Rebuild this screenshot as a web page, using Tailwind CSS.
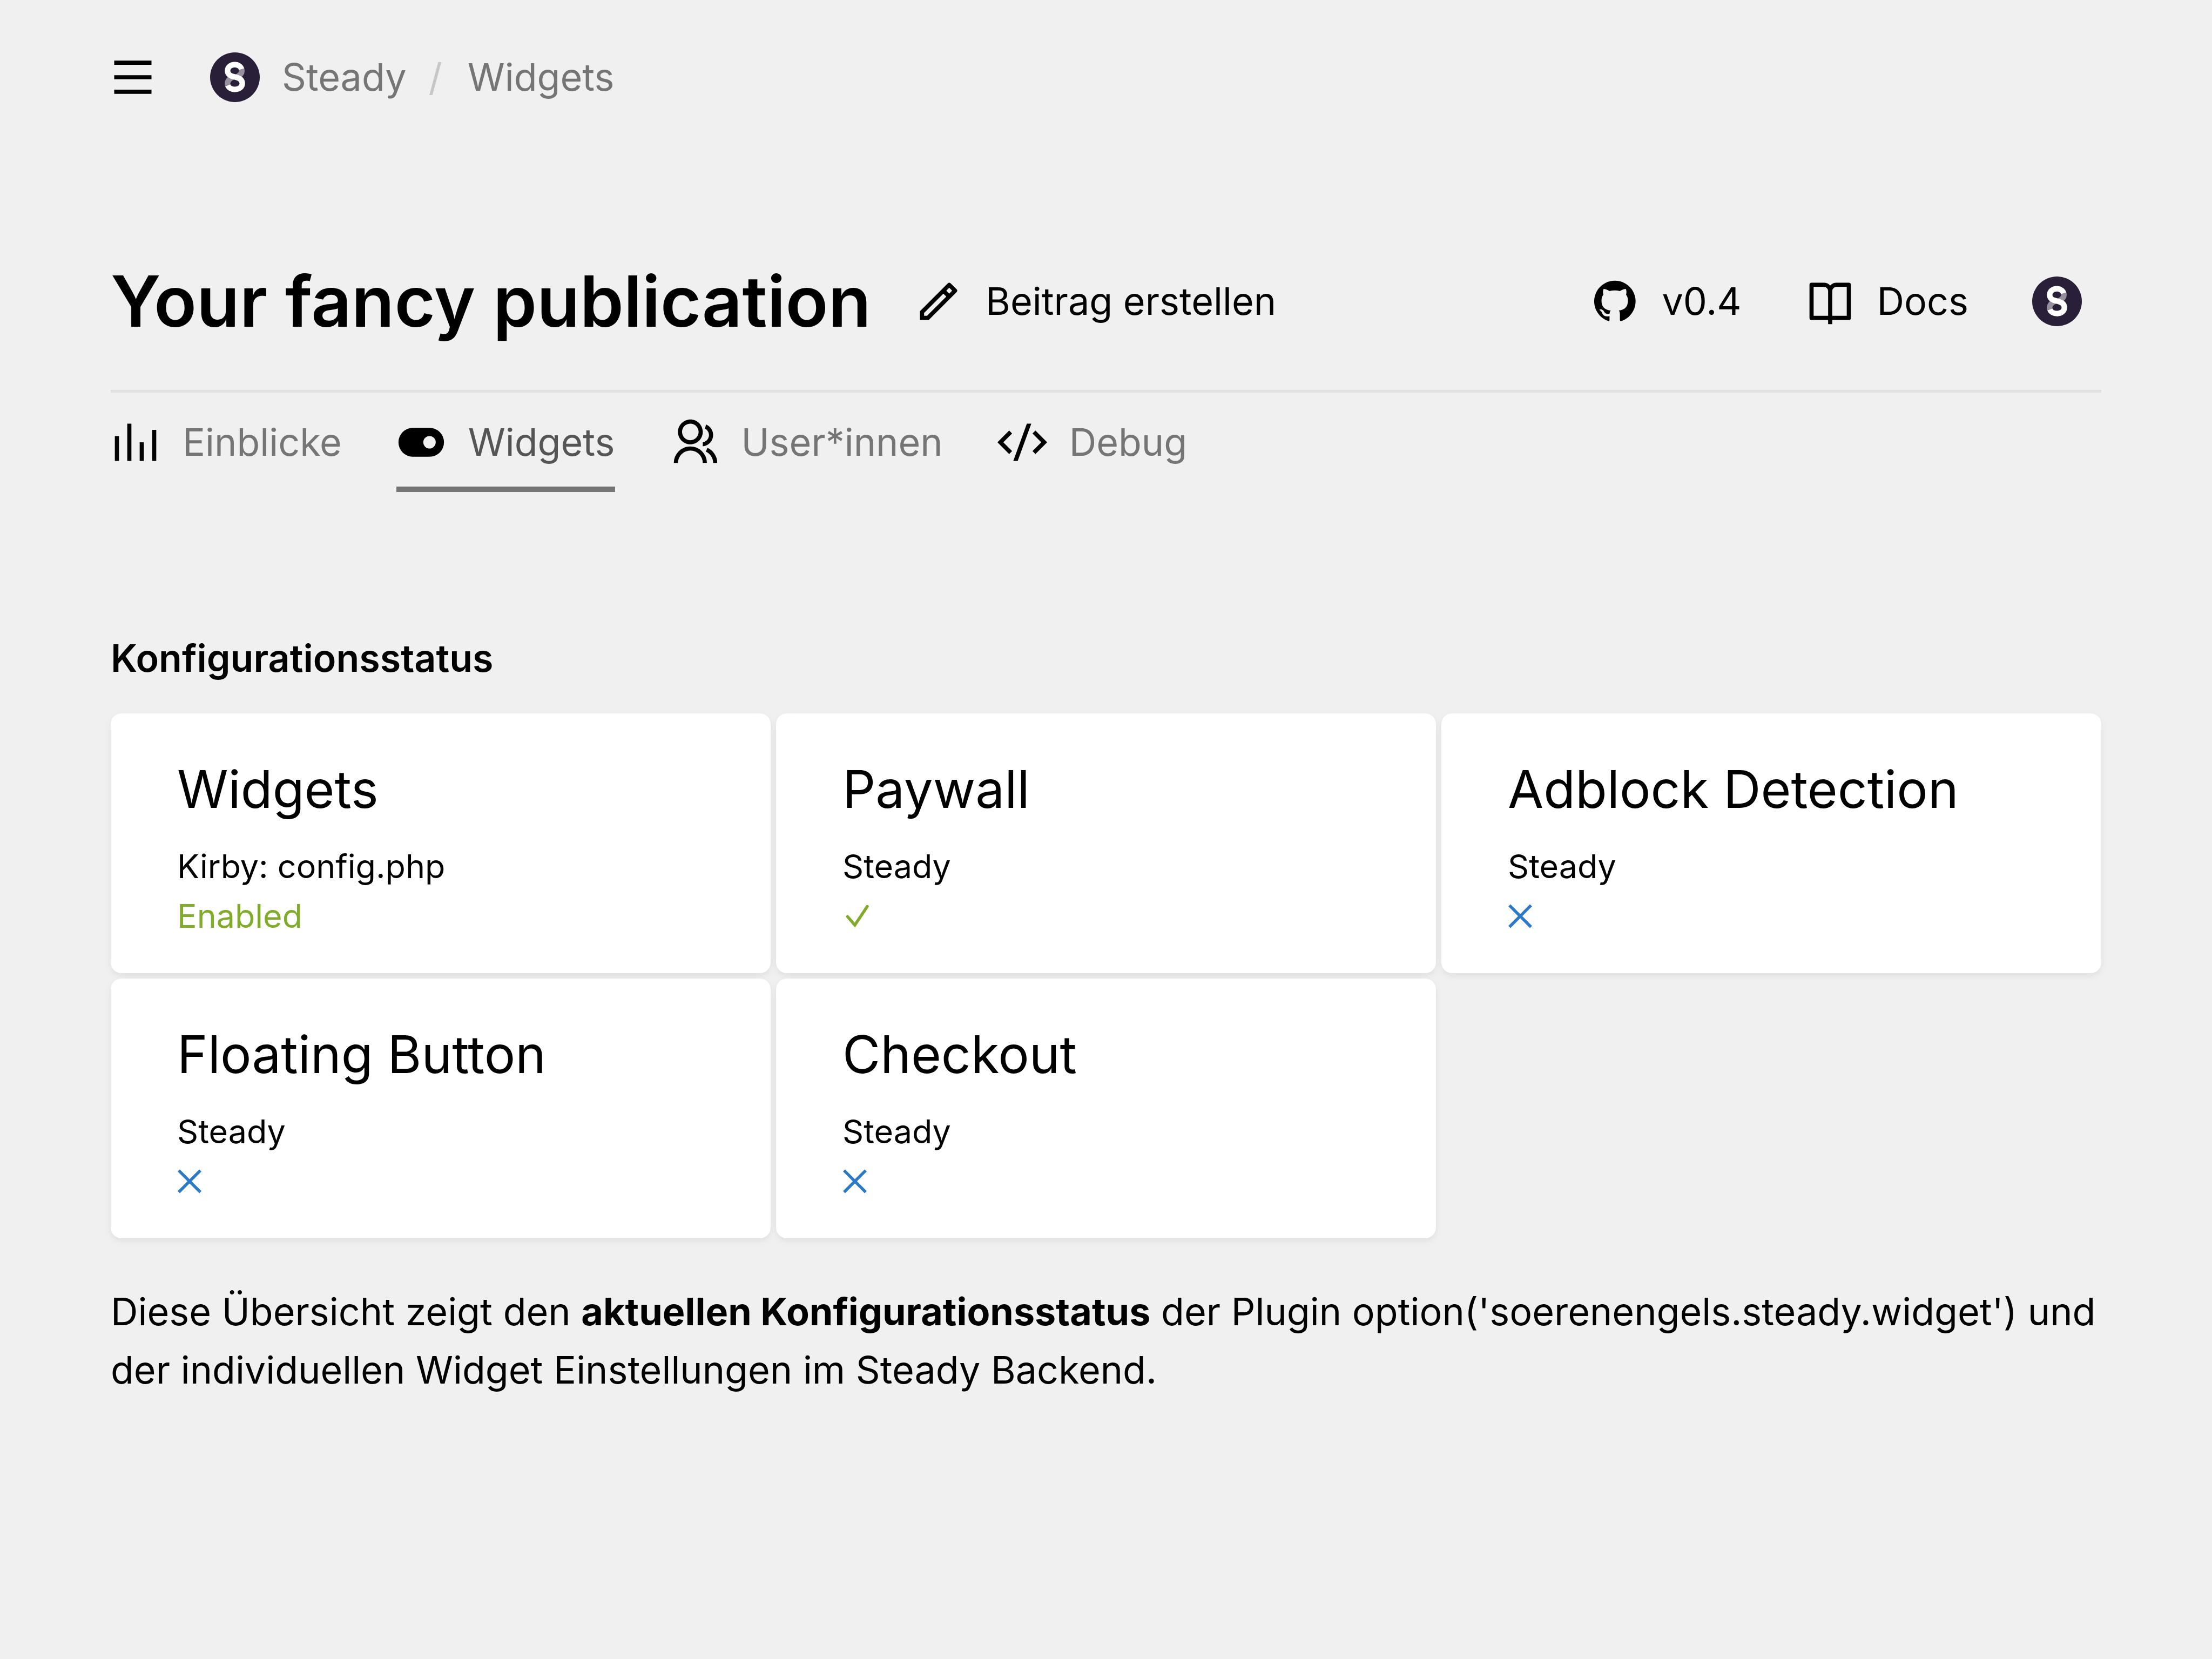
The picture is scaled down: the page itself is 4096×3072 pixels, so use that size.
<!DOCTYPE html>
<html lang="de">
<head>
<meta charset="utf-8">
<title>Widgets | Steady</title>
<script src="https://cdn.jsdelivr.net/npm/@tailwindcss/browser@4"></script>
</head>
<body class="min-h-screen bg-[#f0f0f0] font-[Inter,sans-serif] text-[70px] leading-[108px] text-black">
<svg class="hidden" aria-hidden="true">
  <symbol id="steady" viewBox="0 0 108 108">
    <circle cx="54" cy="54" r="54" fill="#2a1f38"/>
    <g fill="none" stroke-width="12">
      <path d="M68.500 36.500C71 45 65 50 57 54M38.500 71.500C36 62 42 57 51 53" stroke="#958f9e"/>
      <path d="M68.500 36.500C67 31 61 26.500 54 26.500C45 26.500 38 32 38 40C38 48 44 51.500 54 53.500C64 55.500 70 60 70 67.500C70 75.500 63 80.500 54 80.500C47 80.500 40.500 77 38.500 71.500" stroke="#fff"/>
    </g>
  </symbol>
  <symbol id="cross" viewBox="0 0 54 54"><path d="M3.500 4l47 47M50.500 4l-47 47" fill="none" stroke="currentColor" stroke-width="6.500"/></symbol>
</svg>
<div class="px-[205px]">
  <nav class="-ml-[5px] flex h-[286px] items-center" aria-label="Breadcrumb">
    <button type="button" aria-label="Menu" class="mr-[97px]"><svg class="size-[92px]" viewBox="0 0 24 24"><path d="M3 4h18v2H3V4zm0 7h18v2H3v-2zm0 7h18v2H3v-2z"/></svg></button>
    <a href="#" class="flex items-center gap-[41px] text-[#757575]"><svg class="size-[92px]"><use href="#steady"/></svg>Steady</a>
    <span class="ml-[41px] mr-[47px] text-[#c6c6c6]">/</span>
    <a href="#" class="text-[#757575]">Widgets</a>
  </nav>
  <header class="mt-[108px] flex h-[333px] items-center border-b-[5px] border-[#e0e0e0]">
    <h1 class="mr-[79px] text-[130px] font-semibold leading-[180px]">Your fancy publication</h1>
    <a href="#" class="flex items-center gap-[41px]"><svg class="size-[92px]" viewBox="0 0 24 24"><path d="M15.728 9.686l-1.414-1.414L5 17.586V19h1.414l9.314-9.314zm1.414-1.414l1.414-1.414-1.414-1.414-1.414 1.414 1.414 1.414zM7.242 21H3v-4.243L16.435 3.322a1 1 0 0 1 1.414 0l2.829 2.829a1 1 0 0 1 0 1.414L7.243 21z"/></svg>Beitrag erstellen</a>
    <div class="ml-auto flex items-center gap-[118px] pr-[36px]">
      <a href="#" class="flex items-center gap-[41px]"><svg class="size-[92px]" viewBox="0 0 108 108"><path d="M41 97A45 45 0 1 1 67.700 97Q65.300 97.300 65.300 94.500V83Q65.300 76 62.700 74C74 72.500 82.700 68 82.700 52C82.700 47 81.500 43 78.700 39.700Q80.500 33 78.300 27Q73 27 65.300 31.700Q54 29 42.700 31.700Q35 27 29.700 27Q27.500 33 29.300 39.700C26.500 43 25.300 47 25.300 52C25.300 68 34 72.500 45.300 74Q43.200 76 42.800 80.700C38 82 34 81.500 31.500 77.500C29.500 73.500 26.500 71 23.500 71.300C20 71.700 20.500 73 22 73.700C25 75.300 26 78 27 80.500C29 86 34.500 87.800 42.700 86.300V94.500Q42.700 97.300 41 97Z"/></svg>v0.4</a>
      <a href="#" class="flex items-center gap-[41px]"><svg class="size-[92px]" viewBox="0 0 24 24"><path d="M13 21v2h-2v-2H3a1 1 0 0 1-1-1V4a1 1 0 0 1 1-1h6a3.99 3.99 0 0 1 3 1.354A3.99 3.99 0 0 1 15 3h6a1 1 0 0 1 1 1v16a1 1 0 0 1-1 1h-8zm7-2V5h-5a2 2 0 0 0-2 2v12h7zm-9 0V7a2 2 0 0 0-2-2H4v14h7z"/></svg>Docs</a>
      <a href="#" aria-label="Steady"><svg class="size-[92px]"><use href="#steady"/></svg></a>
    </div>
  </header>
  <nav class="flex gap-[101px] text-[#757575]" aria-label="Tabs">
    <a href="#" class="flex h-[184px] items-center gap-[41px]"><svg class="size-[92px] text-black" viewBox="0 0 24 24" fill="currentColor"><path d="M2 9h2v12H2zM8 3h2v18H8zM14 12h2v9h-2zM20 6h2v15h-2z"/></svg>Einblicke</a>
    <a href="#" aria-current="page" class="flex h-[184px] items-center gap-[41px] border-b-[10px] border-[#757575] pt-[10px] text-[#555]"><svg class="size-[92px] text-black" viewBox="0 0 24 24" fill="currentColor"><path d="M8 5h8a7 7 0 0 1 0 14H8A7 7 0 0 1 8 5zm8 10a3 3 0 1 0 0-6 3 3 0 0 0 0 6z"/></svg>Widgets</a>
    <a href="#" class="flex h-[184px] items-center gap-[41px]"><svg class="size-[92px] text-black" viewBox="0 0 24 24" fill="currentColor"><path d="M2 22a8 8 0 1 1 16 0h-2a6 6 0 1 0-12 0H2zm8-9c-3.315 0-6-2.685-6-6s2.685-6 6-6 6 2.685 6 6-2.685 6-6 6zm0-2c2.210 0 4-1.790 4-4s-1.790-4-4-4-4 1.790-4 4 1.790 4 4 4zm8.284 3.703A8.002 8.002 0 0 1 23 22h-2a6.001 6.001 0 0 0-3.537-5.473l.82-1.824zm-.688-11.290A5.500 5.500 0 0 1 21 8.500a5.499 5.499 0 0 1-5 5.478v-2.013a3.500 3.500 0 0 0 1.041-6.609l.555-1.943z"/></svg>User*innen</a>
    <a href="#" class="flex h-[184px] items-center gap-[41px]"><svg class="size-[92px] text-black" viewBox="0 0 24 24" fill="currentColor"><path d="M24 12l-5.657 5.657-1.414-1.414L21.172 12l-4.243-4.243 1.414-1.414L24 12zM2.828 12l4.243 4.243-1.414 1.414L0 12l5.657-5.657L7.070 7.757 2.828 12zm6.960 9H7.660l6.552-18h2.128L9.788 21z"/></svg>Debug</a>
  </nav>
  <main class="pt-[254px]">
    <h2 class="mb-[48px] font-semibold">Konfigurationsstatus</h2>
    <section class="grid grid-cols-3 gap-[10px] text-[61px] leading-[92px]">
      <article class="rounded-[20px] bg-white px-[123px] pb-[60px] pt-[76px] shadow-[0_5px_15px_rgba(0,0,0,0.05),0_5px_10px_rgba(0,0,0,0.025)]">
        <h3 class="mb-[33px] text-[96px] leading-[128px]">Widgets</h3>
        <p>Kirby: config.php</p>
        <p class="text-[#81ab2b]">Enabled</p>
      </article>
      <article class="rounded-[20px] bg-white px-[123px] pb-[60px] pt-[76px] shadow-[0_5px_15px_rgba(0,0,0,0.05),0_5px_10px_rgba(0,0,0,0.025)]">
        <h3 class="mb-[33px] text-[96px] leading-[128px]">Paywall</h3>
        <p>Steady</p>
        <p class="flex h-[92px] items-center text-[#81ab2b]"><svg class="h-[46px] w-[51px]" viewBox="0 0 60 54"><path d="M11 28.500l16 18.500L54 6.500" fill="none" stroke="currentColor" stroke-width="6.500" stroke-linecap="round"/></svg></p>
      </article>
      <article class="rounded-[20px] bg-white px-[123px] pb-[60px] pt-[76px] shadow-[0_5px_15px_rgba(0,0,0,0.05),0_5px_10px_rgba(0,0,0,0.025)]">
        <h3 class="mb-[33px] text-[96px] leading-[128px]">Adblock Detection</h3>
        <p>Steady</p>
        <p class="flex h-[92px] items-center text-[#2b79cb]"><svg class="size-[46px]"><use href="#cross"/></svg></p>
      </article>
      <article class="rounded-[20px] bg-white px-[123px] pb-[60px] pt-[76px] shadow-[0_5px_15px_rgba(0,0,0,0.05),0_5px_10px_rgba(0,0,0,0.025)]">
        <h3 class="mb-[33px] text-[96px] leading-[128px]">Floating Button</h3>
        <p>Steady</p>
        <p class="flex h-[92px] items-center text-[#2b79cb]"><svg class="size-[46px]"><use href="#cross"/></svg></p>
      </article>
      <article class="rounded-[20px] bg-white px-[123px] pb-[60px] pt-[76px] shadow-[0_5px_15px_rgba(0,0,0,0.05),0_5px_10px_rgba(0,0,0,0.025)]">
        <h3 class="mb-[33px] text-[96px] leading-[128px]">Checkout</h3>
        <p>Steady</p>
        <p class="flex h-[92px] items-center text-[#2b79cb]"><svg class="size-[46px]"><use href="#cross"/></svg></p>
      </article>
    </section>
    <p class="mt-[82px]">Diese Übersicht zeigt den <strong class="font-bold">aktuellen Konfigurationsstatus</strong> der Plugin option('soerenengels.steady.widget') und der individuellen Widget Einstellungen im Steady Backend.</p>
  </main>
</div>
</body>
</html>
